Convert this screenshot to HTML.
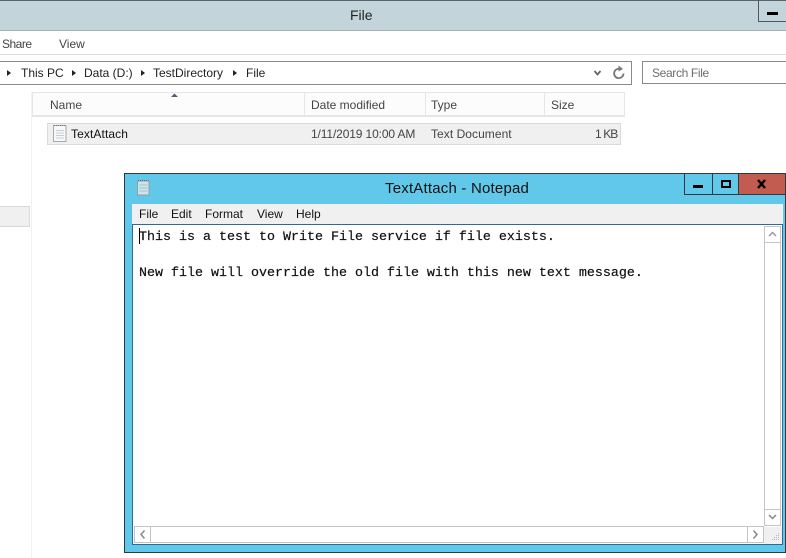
<!DOCTYPE html>
<html><head><meta charset="utf-8"><style>
html,body{margin:0;padding:0}
body{width:786px;height:558px;position:relative;overflow:hidden;background:#fff;font-family:"Liberation Sans",sans-serif;color:#444}
div,span.a{position:absolute;box-sizing:border-box}
.t{white-space:nowrap;font-size:12px;line-height:16px}
svg{position:absolute;display:block}
</style></head><body>
<div style="left:0;top:0;width:786px;height:31px;background:#c3d5db;border-top:1px solid #5a6468;border-bottom:1px solid #a3b1b6"></div>
<div class="t" style="left:350px;top:7px;font-size:14px;color:#222">File</div>
<div style="left:758px;top:0;width:28px;height:22px;border:1px solid #556;border-right:0;border-top:1px solid #5a6468"></div>
<div style="left:767px;top:12px;width:11px;height:3px;background:#000"></div>
<div style="left:0;top:54px;width:786px;height:1px;background:#ddd"></div>
<div class="t" style="left:2px;top:36px;letter-spacing:-.5px">Share</div>
<div class="t" style="left:59px;top:36px">View</div>
<div style="left:-2px;top:61px;width:634px;height:24px;border:1px solid #8a8a8a;background:#fff"></div>
<div style="left:642px;top:61px;width:150px;height:23px;border:1px solid #8a8a8a;background:#fff"></div>
<svg style="left:0;top:61px" width="250" height="24"><g fill="#222"><path d="M7 9l4 3-4 3z"/><path d="M72 9l4 3-4 3z"/><path d="M141 9l4 3-4 3z"/><path d="M233 9l4 3-4 3z"/></g></svg>
<div class="t" style="left:21px;top:65px;color:#222">This PC</div>
<div class="t" style="left:84px;top:65px;color:#222">Data (D:)</div>
<div class="t" style="left:153px;top:65px;color:#222">TestDirectory</div>
<div class="t" style="left:246px;top:65px;color:#222">File</div>
<svg style="left:590px;top:65px" width="36" height="16"><path d="M4.500 6l3 3.500 3-3.500" fill="none" stroke="#666" stroke-width="1.800"/><path d="M33.500 8.500a4.700 4.700 0 1 1-3.200-4.500" fill="none" stroke="#777" stroke-width="1.800"/><path d="M28.500 0.500l4.500 3.500-4.500 2.500z" fill="#777"/></svg>
<div class="t" style="left:652px;top:65px;letter-spacing:-.35px;color:#6d6d6d">Search File</div>

<div style="left:31px;top:92px;width:1px;height:466px;background:#f2f2f2"></div>
<div style="left:32px;top:92px;width:593px;height:25px;background:#fcfcfc;border:1px solid #e6e6e6;border-bottom:2px solid #e6e6e6"></div>
<div style="left:304px;top:92px;width:1px;height:25px;background:#e6e6e6"></div>
<div style="left:425px;top:92px;width:1px;height:25px;background:#e6e6e6"></div>
<div style="left:544px;top:92px;width:1px;height:25px;background:#e6e6e6"></div>
<svg style="left:170px;top:92px" width="10" height="6"><path d="M1 5l3.500-3.500L8 5z" fill="#4c607a"/></svg>
<div class="t" style="left:50px;top:97px">Name</div>
<div class="t" style="left:311px;top:97px">Date modified</div>
<div class="t" style="left:431px;top:97px">Type</div>
<div class="t" style="left:551px;top:97px">Size</div>
<div style="left:47px;top:123px;width:574px;height:22px;background:#f0f0f0;border:1px solid #dadada"></div>
<svg style="left:52px;top:124px" width="16" height="19"><path d="M1.500 1.500h12.500v16H1.500z" fill="#f8f8f8" stroke="#a9a9a9"/><path d="M4 6.500h8M4 9h8M4 11.500h8M4 14h8" stroke="#bfd0dc"/><path d="M2 1.500h11" stroke="#777" stroke-dasharray="1 1"/></svg>
<div class="t" style="left:71px;top:126px;color:#111;letter-spacing:.1px">TextAttach</div>
<div class="t" style="left:311px;top:126px;letter-spacing:-.13px">1/11/2019 10:00 AM</div>
<div class="t" style="left:431px;top:126px;letter-spacing:.05px">Text Document</div>
<div class="t" style="left:595px;top:126px;letter-spacing:-.9px">1 KB</div>
<div style="left:0;top:206px;width:30px;height:21px;background:#f0f0f0;border:1px solid #d9d9d9;border-left:0"></div>

<div style="left:124px;top:173px;width:662px;height:380px;background:#62c8ea;border:1px solid #2f3a40"></div>
<svg style="left:136px;top:179px" width="16" height="18"><path d="M1.500 2h11.500v14H1.500z" fill="#cfe3ea" stroke="#8d9ea6"/><path d="M3 6h8.500M3 9h8.500M3 12h8.500" stroke="#9fc4d4"/><path d="M2 1.500h10.500" stroke="#667" stroke-dasharray="1 1"/></svg>
<div class="t" style="left:385px;top:180px;font-size:15px;letter-spacing:.2px;line-height:18px;color:#111">TextAttach - Notepad</div>
<div style="left:684px;top:173px;width:29px;height:22px;border:1px solid #2f3a40;border-right:0"></div>
<div style="left:712px;top:173px;width:27px;height:22px;border:1px solid #2f3a40;border-right:0"></div>
<div style="left:738px;top:173px;width:48px;height:22px;background:#c35c50;border:1px solid #2f3a40"></div>
<div style="left:693px;top:185px;width:10px;height:3px;background:#000"></div>
<div style="left:721px;top:180px;width:10px;height:8px;border:2px solid #000"></div>
<svg style="left:756px;top:179px" width="12" height="10"><path d="M2 1l7 8M9 1l-7 8" stroke="#000" stroke-width="2.400"/></svg>

<div style="left:132px;top:204px;width:651px;height:20px;background:#f0f0f0"></div>
<div class="t" style="left:139px;top:206px;color:#111">File</div>
<div class="t" style="left:171px;top:206px;color:#111">Edit</div>
<div class="t" style="left:205px;top:206px;color:#111">Format</div>
<div class="t" style="left:257px;top:206px;color:#111">View</div>
<div class="t" style="left:296px;top:206px;color:#111">Help</div>

<div style="left:132px;top:224px;width:651px;height:321px;background:#fff;border:1px solid #2f6a94"></div>
<div style="left:139px;top:228px;width:1px;height:16px;background:#000"></div>
<div style="left:139px;top:229px;font-family:'Liberation Mono',monospace;font-size:13.333px;line-height:18px;color:#111;white-space:pre;-webkit-text-stroke:.2px #111">This is a test to Write File service if file exists.

New file will override the old file with this new text message.</div>

<div style="left:764px;top:226px;width:17px;height:300px;border:1px solid #c4c4c4;background:#fff"></div>
<div style="left:764px;top:242px;width:17px;height:1px;background:#c4c4c4"></div>
<div style="left:764px;top:509px;width:17px;height:1px;background:#c4c4c4"></div>
<svg style="left:764px;top:226px" width="17" height="16"><path d="M5 10l3.500-3.500L12 10" fill="none" stroke="#999" stroke-width="1.500"/></svg>
<svg style="left:764px;top:510px" width="17" height="16"><path d="M5 5l3.500 3.500L12 5" fill="none" stroke="#888" stroke-width="1.500"/></svg>
<div style="left:134px;top:526px;width:630px;height:17px;border:1px solid #c4c4c4;background:#fff"></div>
<div style="left:150px;top:526px;width:1px;height:17px;background:#c4c4c4"></div>
<div style="left:747px;top:526px;width:1px;height:17px;background:#c4c4c4"></div>
<svg style="left:135px;top:527px" width="15" height="15"><path d="M9.500 3.500L6 7.500l3.500 4" fill="none" stroke="#888" stroke-width="1.500"/></svg>
<svg style="left:748px;top:527px" width="15" height="15"><path d="M5.500 3.500L9 7.500l-3.500 4" fill="none" stroke="#888" stroke-width="1.500"/></svg>
<div style="left:764px;top:527px;width:18px;height:17px;background:#f0f0f0"></div>
<svg style="left:770px;top:532px" width="11" height="10"><path d="M8 1h1v1H8zM6 3h1v1H6zM8 3h1v1H8zM4 5h1v1H4zM6 5h1v1H6zM8 5h1v1H8zM2 7h1v1H2zM4 7h1v1H4zM6 7h1v1H6zM8 7h1v1H8z" fill="#b5b5b5"/></svg>
</body></html>
